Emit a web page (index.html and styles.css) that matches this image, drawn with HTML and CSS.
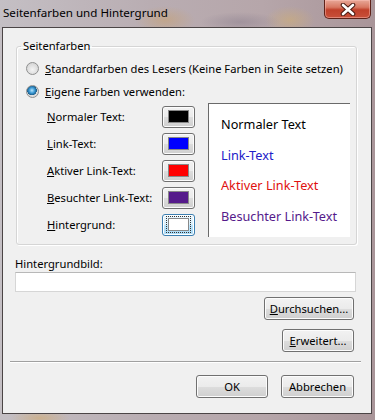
FILE: index.html
```html
<!DOCTYPE html>
<html lang="de">
<head>
    <meta charset="UTF-8">
    <meta name="viewport" content="width=device-width, initial-scale=1.0">
    <title>Seitenfarben und Hintergrund</title>
    <link rel="stylesheet" href="styles.css">
</head>
<body>
    <div class="window">
        <div class="titlebar">
            <span class="title">Seitenfarben und Hintergrund</span>
            <button class="close" title="Schließen">
                <svg width="20" height="13" viewBox="0 0 20 13">
                    <path d="M5 2 L15 11 M15 2 L5 11" stroke="#4a1a12" stroke-width="4.6" stroke-linecap="round"/>
                    <path d="M5 2 L15 11 M15 2 L5 11" stroke="#ffffff" stroke-width="2.6" stroke-linecap="round"/>
                </svg>
            </button>
        </div>
        <div class="client">
            <fieldset class="group">
                <legend>Seitenfarben</legend>
                <label class="radio-row first">
                    <span class="radio"></span>
                    <span><u>S</u>tandardfarben des Lesers (Keine Farben in Seite setzen)</span>
                </label>
                <label class="radio-row">
                    <span class="radio checked"></span>
                    <span><u>E</u>igene Farben verwenden:</span>
                </label>
                <div class="colors">
                    <div class="color-list">
                        <div class="color-row">
                            <span class="color-label"><u>N</u>ormaler Text:</span>
                            <span class="color-btn"><span class="swatch sw-text"></span></span>
                        </div>
                        <div class="color-row">
                            <span class="color-label"><u>L</u>ink-Text:</span>
                            <span class="color-btn"><span class="swatch sw-link"></span></span>
                        </div>
                        <div class="color-row">
                            <span class="color-label"><u>A</u>ktiver Link-Text:</span>
                            <span class="color-btn"><span class="swatch sw-active"></span></span>
                        </div>
                        <div class="color-row">
                            <span class="color-label"><u>B</u>esuchter Link-Text:</span>
                            <span class="color-btn"><span class="swatch sw-visited"></span></span>
                        </div>
                        <div class="color-row">
                            <span class="color-label"><u>H</u>intergrund:</span>
                            <span class="color-btn focused"><span class="swatch sw-bg"></span></span>
                        </div>
                    </div>
                    <div class="preview">
                        <div class="pv-text">Normaler Text</div>
                        <div class="pv-link">Link-Text</div>
                        <div class="pv-active">Aktiver Link-Text</div>
                        <div class="pv-visited">Besuchter Link-Text</div>
                    </div>
                </div>
            </fieldset>

            <div class="bg-section">
                <div class="bg-label">Hinter<u>g</u>rundbild:</div>
                <div class="textbox"></div>
                <div class="btn-row"><button class="btn browse"><u>D</u>urchsuchen...</button></div>
                <div class="btn-row second"><button class="btn advanced"><u>E</u>rweitert...</button></div>
            </div>

            <div class="separator"></div>

            <div class="footer">
                <button class="btn ok">OK</button>
                <button class="btn cancel">Abbrechen</button>
            </div>
        </div>
    </div>
</body>
</html>
```

FILE: styles.css
```css
body {
    margin: 0;
    font-family: "Noto Sans", "Open Sans", sans-serif;
    font-size: 11.2px;
    color: #000;
}
.window {
    width: 375px;
    height: 420px;
    background:
        radial-gradient(ellipse 30px 14px at 165px 20px, rgba(200, 160, 110, 0.55), transparent),
        radial-gradient(ellipse 40px 10px at 240px 22px, rgba(120, 110, 130, 0.35), transparent),
        radial-gradient(ellipse 25px 14px at 290px 20px, rgba(210, 175, 110, 0.5), transparent),
        radial-gradient(ellipse 30px 8px at 40px 418px, rgba(210, 170, 110, 0.6), transparent),
        linear-gradient(90deg, #c4bfc4 0%, #b9adb2 40%, #b6a6aa 70%, #a99599 100%);
    overflow: hidden;
}
.titlebar {
    height: 27px;
    display: flex;
    align-items: flex-start;
    position: relative;
}
.title {
    margin: 5px 0 0 3px;
    line-height: 16px;
    font-size: 11.6px;
}
.close {
    position: absolute;
    left: 324px;
    top: 0;
    width: 47px;
    height: 19px;
    padding: 0;
    border: 1px solid #5e2219;
    border-top: 0;
    border-radius: 0 0 5px 5px;
    background: linear-gradient(#e8a898 0%, #d87862 40%, #c0402a 55%, #c8503a 100%);
    box-shadow: inset 0 0 0 1px rgba(255, 200, 190, 0.45);
    display: flex;
    align-items: center;
    justify-content: center;
}
.client {
    margin-left: 2px;
    width: 368px;
    height: 385px;
    border: 1px solid #4b4546;
    background: #f0f0f0;
}
.group {
    margin: 10px 14px 0 13px;
    padding: 0 0 6px 0;
    border: 1px solid #d5d5d5;
    border-radius: 3px;
    box-shadow: inset 1px 1px 0 #fff, 1px 1px 0 #fff;
    min-inline-size: 0;
}
.group legend {
    margin-left: 4px;
    padding: 0 2px;
    line-height: 16px;
}
.radio-row {
    display: flex;
    align-items: center;
    height: 22px;
    margin-top: 1px;
    padding-left: 9px;
    gap: 6px;
    white-space: nowrap;
}
.radio-row.first {
    margin-top: 3px;
}
.radio {
    width: 11px;
    height: 11px;
    border-radius: 50%;
    border: 1px solid #8e8f8f;
    background: radial-gradient(circle at 50% 60%, #f4f4f4 0%, #dcdcdc 60%, #cfcfcf 100%);
    flex-shrink: 0;
}
.radio.checked {
    background:
        radial-gradient(circle at 45% 40%, #b8e4fb 0%, #3d9bd6 30%, #1b5e8c 52%, transparent 56%),
        radial-gradient(circle, #eaeaea 0%, #d6d6d6 100%);
}
.colors {
    display: flex;
    margin-top: 1px;
    padding-left: 30px;
}
.color-list {
    width: 148px;
}
.color-row {
    display: flex;
    align-items: center;
    justify-content: space-between;
    height: 27px;
    white-space: nowrap;
}
.color-btn {
    width: 31px;
    height: 20px;
    border: 1px solid #707070;
    border-radius: 3px;
    background: linear-gradient(#f2f2f2 0%, #ebebeb 50%, #dddddd 51%, #cfcfcf 100%);
    box-shadow: inset 0 0 0 1px #fcfcfc;
    display: flex;
    align-items: center;
    justify-content: center;
}
.color-btn.focused {
    border-color: #3c7fb1;
    background: linear-gradient(#eaf6fd 0%, #d9f0fc 50%, #bee6fd 51%, #a7d9f5 100%);
    box-shadow: inset 0 0 0 1px #fff;
}
.color-btn.focused .swatch {
    outline: 1px dotted #333;
    outline-offset: 1px;
}
.swatch {
    width: 19px;
    height: 11px;
    border: 1px solid #888;
}
.sw-text { background: #000; }
.sw-link { background: #0000ff; }
.sw-active { background: #ff0000; }
.sw-visited { background: #551a8b; }
.sw-bg { background: #fff; }
.preview {
    margin-left: 13px;
    width: 142px;
    height: 134px;
    box-sizing: border-box;
    background: #fff;
    border-left: 1px solid #6a6a6a;
    border-top: 1px solid #6a6a6a;
    padding-left: 12px;
    padding-top: 11px;
    font-size: 12.7px;
    white-space: nowrap;
}
.preview div {
    height: 30.5px;
    line-height: 18px;
}
.pv-text { color: #000; }
.pv-link { color: #2020c8; }
.pv-active { color: #e01010; }
.pv-visited { color: #551a8b; }
.bg-section {
    padding: 0 15px 0 12px;
}
.bg-label {
    margin-top: 11px;
    line-height: 16px;
}
.textbox {
    height: 18px;
    border: 1px solid #d6d6d6;
    border-top-color: #b8b8b8;
    background: #fff;
}
.btn-row {
    display: flex;
    justify-content: flex-end;
    margin-top: 5px;
    margin-right: 2px;
}
.btn-row.second {
    margin-top: 9px;
}
.btn {
    height: 23px;
    padding: 0;
    border: 1px solid #707070;
    border-radius: 3px;
    background: linear-gradient(#f2f2f2 0%, #ebebeb 50%, #dddddd 51%, #cfcfcf 100%);
    box-shadow: inset 0 0 0 1px #fcfcfc;
    font-family: inherit;
    font-size: 11.2px;
    color: #000;
}
.browse { width: 90px; }
.advanced { width: 72px; }
.separator {
    margin: 9px 10px 0 7px;
    height: 1px;
    background: #a0a0a0;
    border-bottom: 1px solid #fff;
}
.footer {
    display: flex;
    justify-content: flex-end;
    gap: 13px;
    margin-top: 12px;
    padding-right: 17px;
}
.ok { width: 72px; }
.cancel { width: 73px; }
```
